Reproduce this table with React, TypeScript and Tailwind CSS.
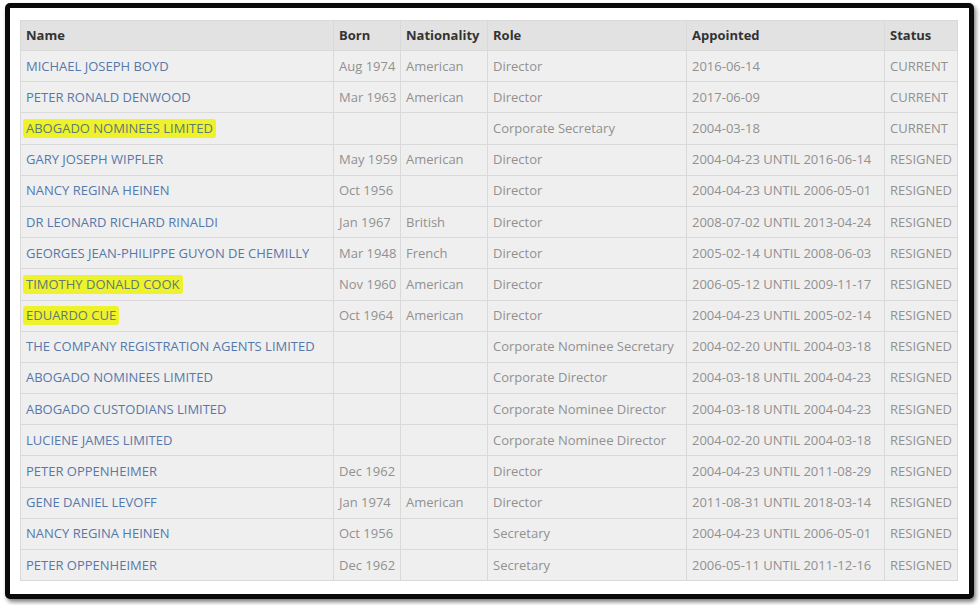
import React from "react";

type Row = {
  name: string;
  born: string;
  nat: string;
  role: string;
  appt: string;
  status: string;
  hl?: boolean;
};

const rows: Row[] = [
  { name: "MICHAEL JOSEPH BOYD", born: "Aug 1974", nat: "American", role: "Director", appt: "2016-06-14", status: "CURRENT" },
  { name: "PETER RONALD DENWOOD", born: "Mar 1963", nat: "American", role: "Director", appt: "2017-06-09", status: "CURRENT" },
  { name: "ABOGADO NOMINEES LIMITED", born: "", nat: "", role: "Corporate Secretary", appt: "2004-03-18", status: "CURRENT", hl: true },
  { name: "GARY JOSEPH WIPFLER", born: "May 1959", nat: "American", role: "Director", appt: "2004-04-23 UNTIL 2016-06-14", status: "RESIGNED" },
  { name: "NANCY REGINA HEINEN", born: "Oct 1956", nat: "", role: "Director", appt: "2004-04-23 UNTIL 2006-05-01", status: "RESIGNED" },
  { name: "DR LEONARD RICHARD RINALDI", born: "Jan 1967", nat: "British", role: "Director", appt: "2008-07-02 UNTIL 2013-04-24", status: "RESIGNED" },
  { name: "GEORGES JEAN-PHILIPPE GUYON DE CHEMILLY", born: "Mar 1948", nat: "French", role: "Director", appt: "2005-02-14 UNTIL 2008-06-03", status: "RESIGNED" },
  { name: "TIMOTHY DONALD COOK", born: "Nov 1960", nat: "American", role: "Director", appt: "2006-05-12 UNTIL 2009-11-17", status: "RESIGNED", hl: true },
  { name: "EDUARDO CUE", born: "Oct 1964", nat: "American", role: "Director", appt: "2004-04-23 UNTIL 2005-02-14", status: "RESIGNED", hl: true },
  { name: "THE COMPANY REGISTRATION AGENTS LIMITED", born: "", nat: "", role: "Corporate Nominee Secretary", appt: "2004-02-20 UNTIL 2004-03-18", status: "RESIGNED" },
  { name: "ABOGADO NOMINEES LIMITED", born: "", nat: "", role: "Corporate Director", appt: "2004-03-18 UNTIL 2004-04-23", status: "RESIGNED" },
  { name: "ABOGADO CUSTODIANS LIMITED", born: "", nat: "", role: "Corporate Nominee Director", appt: "2004-03-18 UNTIL 2004-04-23", status: "RESIGNED" },
  { name: "LUCIENE JAMES LIMITED", born: "", nat: "", role: "Corporate Nominee Director", appt: "2004-02-20 UNTIL 2004-03-18", status: "RESIGNED" },
  { name: "PETER OPPENHEIMER", born: "Dec 1962", nat: "", role: "Director", appt: "2004-04-23 UNTIL 2011-08-29", status: "RESIGNED" },
  { name: "GENE DANIEL LEVOFF", born: "Jan 1974", nat: "American", role: "Director", appt: "2011-08-31 UNTIL 2018-03-14", status: "RESIGNED" },
  { name: "NANCY REGINA HEINEN", born: "Oct 1956", nat: "", role: "Secretary", appt: "2004-04-23 UNTIL 2006-05-01", status: "RESIGNED" },
  { name: "PETER OPPENHEIMER", born: "Dec 1962", nat: "", role: "Secretary", appt: "2006-05-11 UNTIL 2011-12-16", status: "RESIGNED" },
];

const td = "border border-[#d9d9d9] px-[5px] py-0 text-left align-middle whitespace-nowrap";

export default function App() {
  return (
    <div className="w-[980px] h-[605px] bg-white pt-[3px] pl-[5px]" style={{ fontFamily: '"Open Sans", "Noto Sans", sans-serif' }}>
      <div className="w-[969px] h-[596px] border-[5px] border-[#0a0a0a] rounded-[5px] bg-white shadow-[2px_3px_4px_rgba(0,0,0,0.5)] pt-[12px] pl-[10px]">
        <table className="border-collapse table-fixed w-[937px] text-[13px] leading-none">
          <colgroup>
            <col className="w-[313px]" />
            <col className="w-[67px]" />
            <col className="w-[87px]" />
            <col className="w-[199px]" />
            <col className="w-[198px]" />
            <col className="w-[73px]" />
          </colgroup>
          <thead>
            <tr className="h-[30px] bg-[#e2e2e2] text-[#333333] font-bold">
              <th className={td}>Name</th>
              <th className={td}>Born</th>
              <th className={td}>Nationality</th>
              <th className={td}>Role</th>
              <th className={td}>Appointed</th>
              <th className={td}>Status</th>
            </tr>
          </thead>
          <tbody>
            {rows.map((r, i) => (
              <tr key={i} className="h-[31.2px] bg-[#efefef] text-[#919191]">
                <td className={td}>
                  {r.hl ? (
                    <span className="inline-block -ml-[3px] px-[3px] py-[3px] bg-[#eef22a] rounded-[3px] text-[#5d7a78]">
                      {r.name}
                    </span>
                  ) : (
                    <span className="text-[#5579ab]">{r.name}</span>
                  )}
                </td>
                <td className={td}>{r.born}</td>
                <td className={td}>{r.nat}</td>
                <td className={td}>{r.role}</td>
                <td className={td}>{r.appt}</td>
                <td className={td}>{r.status}</td>
              </tr>
            ))}
          </tbody>
        </table>
      </div>
    </div>
  );
}
